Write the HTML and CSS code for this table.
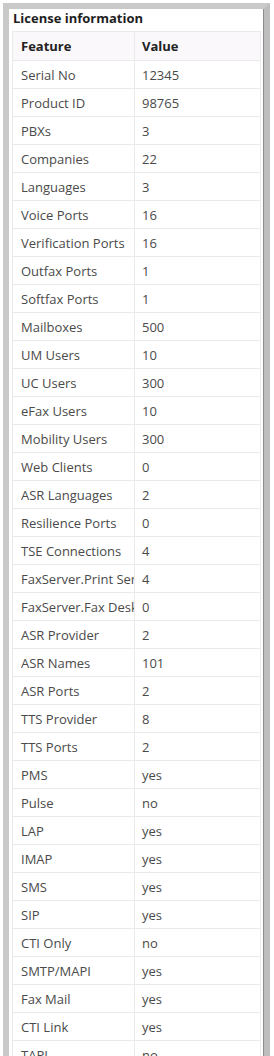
FILE: index.html
```html
<!DOCTYPE html>
<html>
<head>
<meta charset="utf-8">
<link rel="stylesheet" href="styles.css">
</head>
<body>
<div class="panel">
  <div class="title">License information</div>
  <table class="lic">
    <colgroup><col class="c1"><col class="c2"></colgroup>
    <thead><tr><th>Feature</th><th>Value</th></tr></thead>
    <tbody>
      <tr><td>Serial No</td><td>12345</td></tr>
      <tr><td>Product ID</td><td>98765</td></tr>
      <tr><td>PBXs</td><td>3</td></tr>
      <tr><td>Companies</td><td>22</td></tr>
      <tr><td>Languages</td><td>3</td></tr>
      <tr><td>Voice Ports</td><td>16</td></tr>
      <tr><td>Verification Ports</td><td>16</td></tr>
      <tr><td>Outfax Ports</td><td>1</td></tr>
      <tr><td>Softfax Ports</td><td>1</td></tr>
      <tr><td>Mailboxes</td><td>500</td></tr>
      <tr><td>UM Users</td><td>10</td></tr>
      <tr><td>UC Users</td><td>300</td></tr>
      <tr><td>eFax Users</td><td>10</td></tr>
      <tr><td>Mobility Users</td><td>300</td></tr>
      <tr><td>Web Clients</td><td>0</td></tr>
      <tr><td>ASR Languages</td><td>2</td></tr>
      <tr><td>Resilience Ports</td><td>0</td></tr>
      <tr><td>TSE Connections</td><td>4</td></tr>
      <tr><td>FaxServer.Print Server</td><td>4</td></tr>
      <tr><td>FaxServer.Fax Desktop</td><td>0</td></tr>
      <tr><td>ASR Provider</td><td>2</td></tr>
      <tr><td>ASR Names</td><td>101</td></tr>
      <tr><td>ASR Ports</td><td>2</td></tr>
      <tr><td>TTS Provider</td><td>8</td></tr>
      <tr><td>TTS Ports</td><td>2</td></tr>
      <tr><td>PMS</td><td>yes</td></tr>
      <tr><td>Pulse</td><td>no</td></tr>
      <tr><td>LAP</td><td>yes</td></tr>
      <tr><td>IMAP</td><td>yes</td></tr>
      <tr><td>SMS</td><td>yes</td></tr>
      <tr><td>SIP</td><td>yes</td></tr>
      <tr><td>CTI Only</td><td>no</td></tr>
      <tr><td>SMTP/MAPI</td><td>yes</td></tr>
      <tr><td>Fax Mail</td><td>yes</td></tr>
      <tr><td>CTI Link</td><td>yes</td></tr>
      <tr><td>TAPI</td><td>no</td></tr>
    </tbody>
  </table>
</div>
</body>
</html>
```
FILE: styles.css
```css
html, body {
  margin: 0;
  padding: 0;
  background: #ffffff;
}
body {
  font-family: "Open Sans", "Liberation Sans", sans-serif;
  color: #4a4a4a;
  overflow: hidden;
  height: 1056px;
}
.panel {
  margin: 3px 0 0 3px;
  width: 251px;
  height: 1100px;
  border: 6px solid #c9c9c9;
  border-right-color: #bdbdbd;
  box-shadow: inset -1px 0 0 #8c8c8c;
  padding: 0 1px 0 3px;
  box-sizing: content-box;
}
.title {
  font-size: 13px;
  font-weight: 700;
  color: #1e1e1e;
  height: 22px;
  line-height: 19px;
  padding-left: 1px;
}
.lic {
  width: 248px;
  table-layout: fixed;
  border-collapse: collapse;
  font-size: 13px;
}
.c1 { width: 122px; }
.c2 { width: 126px; }
.lic th, .lic td {
  border: 1px solid #eaeaea;
  padding: 0 7px 0 8px;
  white-space: nowrap;
  overflow: hidden;
  text-align: left;
}
.lic th {
  height: 28px;
  background: #fbf8fb;
  font-weight: 700;
  color: #222222;
}
.lic td {
  height: 27px;
}
.lic td + td, .lic th + th {
  padding-left: 7px;
}
```
